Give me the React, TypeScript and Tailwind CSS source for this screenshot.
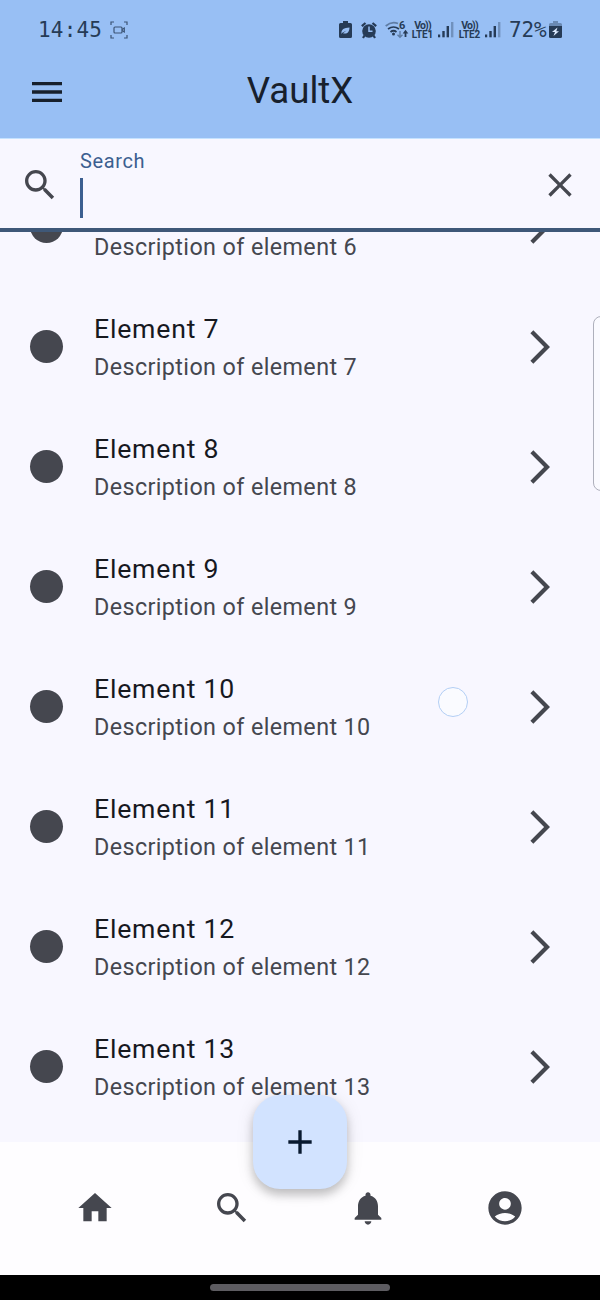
import type { ReactNode } from 'react';

const icons = {
  menu: 'M3,6H21V8H3V6M3,11H21V13H3V11M3,16H21V18H3V16Z',
  search:
    'M9.5,3A6.5,6.5 0 0,1 16,9.5C16,11.11 15.41,12.59 14.44,13.73L14.71,14H15.5L20.5,19L19,20.5L14,15.5V14.71L13.73,14.44C12.59,15.41 11.11,16 9.5,16A6.5,6.5 0 0,1 3,9.5A6.5,6.5 0 0,1 9.5,3M9.5,5C7,5 5,7 5,9.5C5,12 7,14 9.5,14C12,14 14,12 14,9.5C14,7 12,5 9.5,5Z',
  close:
    'M19,6.41L17.59,5L12,10.59L6.41,5L5,6.41L10.59,12L5,17.59L6.41,19L12,13.41L17.59,19L19,17.59L13.41,12L19,6.41Z',
  forward: 'M6.23 20.23L8 22l10-10L8 2 6.23 3.77 14.46 12z',
  home: 'M10,20V14H14V20H19V12H22L12,3L2,12H5V20H10Z',
  bell: 'M12 22c1.1 0 2-.9 2-2h-4c0 1.1.89 2 2 2zm6-6v-5c0-3.07-1.64-5.64-4.5-6.32V4c0-.83-.67-1.5-1.5-1.5s-1.5.67-1.5 1.5v.68C7.63 5.36 6 7.92 6 11v5l-2 2v1h16v-1l-2-2z',
  account:
    'M12 2C6.48 2 2 6.48 2 12s4.48 10 10 10 10-4.48 10-10S17.52 2 12 2zm0 4c1.93 0 3.5 1.57 3.5 3.5S13.93 13 12 13s-3.5-1.57-3.5-3.5S10.07 6 12 6zm0 14c-2.03 0-4.43-.82-6.14-2.88C7.55 15.8 9.68 15 12 15s4.45.8 6.14 2.12C16.43 19.18 14.03 20 12 20z',
  plus: 'M19,13H13V19H11V13H5V11H11V5H13V11H19V13Z',
};

function Icon({ name, className = '' }: { name: keyof typeof icons; className?: string }) {
  return (
    <svg viewBox="0 0 24 24" className={`size-10 shrink-0 ${className}`} fill="currentColor">
      <path d={icons[name]} />
    </svg>
  );
}

function Signal() {
  return (
    <svg viewBox="0 0 16 18" className="h-[18px] w-4 shrink-0" fill="currentColor">
      <rect x="0" y="13.5" width="2.2" height="2.8" />
      <rect x="4.3" y="10" width="2.4" height="6.3" />
      <rect x="8.6" y="5" width="2.4" height="11.3" />
      <rect x="13" y="1" width="2.4" height="15.3" opacity="0.35" />
    </svg>
  );
}

function Volte({ children }: { children: ReactNode }) {
  return (
    <div className="flex w-[23px] shrink-0 flex-col items-center text-[10.5px] leading-[9.5px] font-bold whitespace-nowrap">
      <span className="tracking-[-0.8px]">Vo))</span>
      <span className="text-[10px] tracking-[-0.1px]">{children}</span>
    </div>
  );
}

function StatusBar() {
  return (
    <div className="flex h-[60px] items-center pl-[38px] text-[#263b56]">
      <span className="w-[72px] pt-[2px] font-['DejaVu_Sans_Mono',monospace] text-[21px] tracking-[0.2px]">14:45</span>
      <svg viewBox="0 0 18 18" className="size-[18px]" fill="none" stroke="currentColor" strokeWidth="1.2" opacity="0.8">
        <path d="M1 4V1H4M14 1H17V4M17 14V17H14M4 17H1V14" />
        <rect x="4" y="6" width="8" height="6" rx="1" />
        <path d="M12 8.5L14.3 7V11L12 9.5" />
      </svg>
      <svg viewBox="0 0 13 18" className="ml-[211px] h-[18px] w-[13px]">
        <path d="M4 0H9V2H11.5Q13 2 13 3.5V15.5Q13 17 11.5 17H1.5Q0 17 0 15.5V3.5Q0 2 1.5 2H4Z" fill="currentColor" />
        <path d="M2.5 13C2 8 5 7 10.5 6.5C10.5 11 8 13.5 4 12.3L7.5 9.5L3.3 11.8Z" fill="#98bff4" />
      </svg>
      <svg viewBox="0 0 16 17" className="ml-[9px] h-[17px] w-4" fill="none" stroke="currentColor">
        <circle cx="8" cy="9" r="6.8" fill="currentColor" stroke="none" />
        <path d="M0.8 4.2L4.5 1M15.2 4.2L11.5 1M3.5 13.5L2 16M12.5 13.5L14 16" strokeWidth="2.2" />
        <path d="M8 4.5V9.3H11.5" stroke="#98bff4" strokeWidth="1.5" />
      </svg>
      <svg viewBox="0 0 24 20" className="ml-[8px] h-5 w-6" fill="none" stroke="currentColor" strokeWidth="1.7">
        <path d="M0.7 6Q6.5 1 13 3.5" opacity="0.5" />
        <path d="M3 9Q8.5 5 14 9M5.5 12Q8.5 9.5 11.5 12" />
        <circle cx="8.5" cy="14" r="1.5" fill="currentColor" stroke="none" />
        <path d="M15 11V17M12.5 14.7L15 17.2L17.5 14.7" strokeWidth="1.4" opacity="0.5" />
        <path d="M20.5 17V12" strokeWidth="1.8" />
        <path d="M20.5 9.7L23.3 13.5H17.7Z" fill="currentColor" stroke="none" />
        <text x="14" y="9" fontSize="11" fontWeight="700" fill="currentColor" stroke="none">6</text>
      </svg>
      <div className="ml-[2px] flex items-center gap-[4px]">
        <Volte>LTE1</Volte>
        <Signal />
        <Volte>LTE2</Volte>
        <Signal />
      </div>
      <span className="ml-[8px] w-[40px] pt-[2px] font-['DejaVu_Sans_Mono',monospace] text-[21px] tracking-[-0.1px]">72%</span>
      <svg viewBox="0 0 13 18" className="h-[18px] w-[13px]">
        <path d="M4 0H9V2H11.5Q13 2 13 3.5V6H0V3.5Q0 2 1.5 2H4Z" fill="currentColor" opacity="0.4" />
        <path d="M0 5H13V15.5Q13 17 11.5 17H1.5Q0 17 0 15.5Z" fill="currentColor" />
        <path d="M8.5 6.5L3 11H6L4.5 15L10 10.3H7.3Z" fill="#dceaff" />
      </svg>
    </div>
  );
}

function ListRow({ n, titleHidden = false }: { n: number; titleHidden?: boolean }) {
  return (
    <div className="flex h-[120px] shrink-0 items-center pr-10 pl-[30px]">
      <div className="mb-px size-[33px] shrink-0 rounded-full bg-[#45474f]" />
      <div className="ml-[31px] flex-1">
        <div className="mb-px h-[39px] text-[26.67px] leading-[38px] tracking-[0.78px] text-[#17191f]">
          {titleHidden ? null : `Element ${n}`}
        </div>
        <div className="text-[23.33px] leading-[34px] tracking-[0.39px] text-[#45474f]">Description of element {n}</div>
      </div>
      <Icon name="forward" className="text-[#45474f]" />
    </div>
  );
}

export default function App() {
  return (
    <div className="relative flex h-[1300px] w-[600px] flex-col overflow-hidden bg-[#f8f7ff] font-[Roboto,sans-serif]">
      <header className="h-[138px] shrink-0 bg-[#98bff4]">
        <StatusBar />
        <div className="grid h-[63px] grid-cols-[1fr_auto_1fr] items-center px-[27px] text-[#17202c]">
          <Icon name="menu" />
          <h1 className="mb-[2px] text-[36.67px] leading-[60px]">VaultX</h1>
        </div>
      </header>

      <div className="flex h-[94px] shrink-0 border-t border-b-[4px] border-t-[#c5e2ff] border-b-[#3f5878] pr-5 pl-5 text-[#45474f]">
        <Icon name="search" className="mt-[26px]" />
        <div className="ml-5 flex-1 pt-[10px] text-[#3c5f90]">
          <div className="text-[20px] leading-6 tracking-[0.63px]">Search</div>
          <div className="mt-[5px] h-10 w-[3px] bg-[#3c5f90]" />
        </div>
        <Icon name="close" className="mt-[26px]" />
      </div>

      <main className="flex min-h-0 flex-1 flex-col overflow-hidden">
        <div className="-mt-[65px] flex flex-col">
          {[6, 7, 8, 9, 10, 11, 12, 13].map((n) => (
            <ListRow key={n} n={n} titleHidden={n === 6} />
          ))}
        </div>
      </main>

      <nav className="flex h-[133px] shrink-0 items-center justify-between bg-[#fefdff] px-[75px] pb-px text-[#45474f]">
        <Icon name="home" />
        <Icon name="search" />
        <Icon name="bell" />
        <Icon name="account" />
      </nav>

      <div className="flex h-[25px] shrink-0 items-center justify-center bg-black">
        <div className="h-[7px] w-[180px] rounded-full bg-[#5d5c61]" />
      </div>

      <button
        aria-label="Add"
        className="absolute top-[1095px] left-[253px] flex size-[94px] items-center justify-center rounded-[27px] bg-[#d2e3ff] text-[#08192f] shadow-[0_6px_10px_rgba(0,0,0,0.2),0_2px_18px_rgba(0,0,0,0.1)]"
      >
        <Icon name="plus" />
      </button>
      <div className="absolute top-[687px] left-[438px] size-[30px] rounded-full border-[1.5px] border-[#b3cff5] bg-[#fafbff]" />
      <div className="absolute top-[316px] left-[593px] h-[175px] w-[20px] rounded-[8px] border-[1.5px] border-[#aeb0bc] bg-[#fafaff]" />
    </div>
  );
}
